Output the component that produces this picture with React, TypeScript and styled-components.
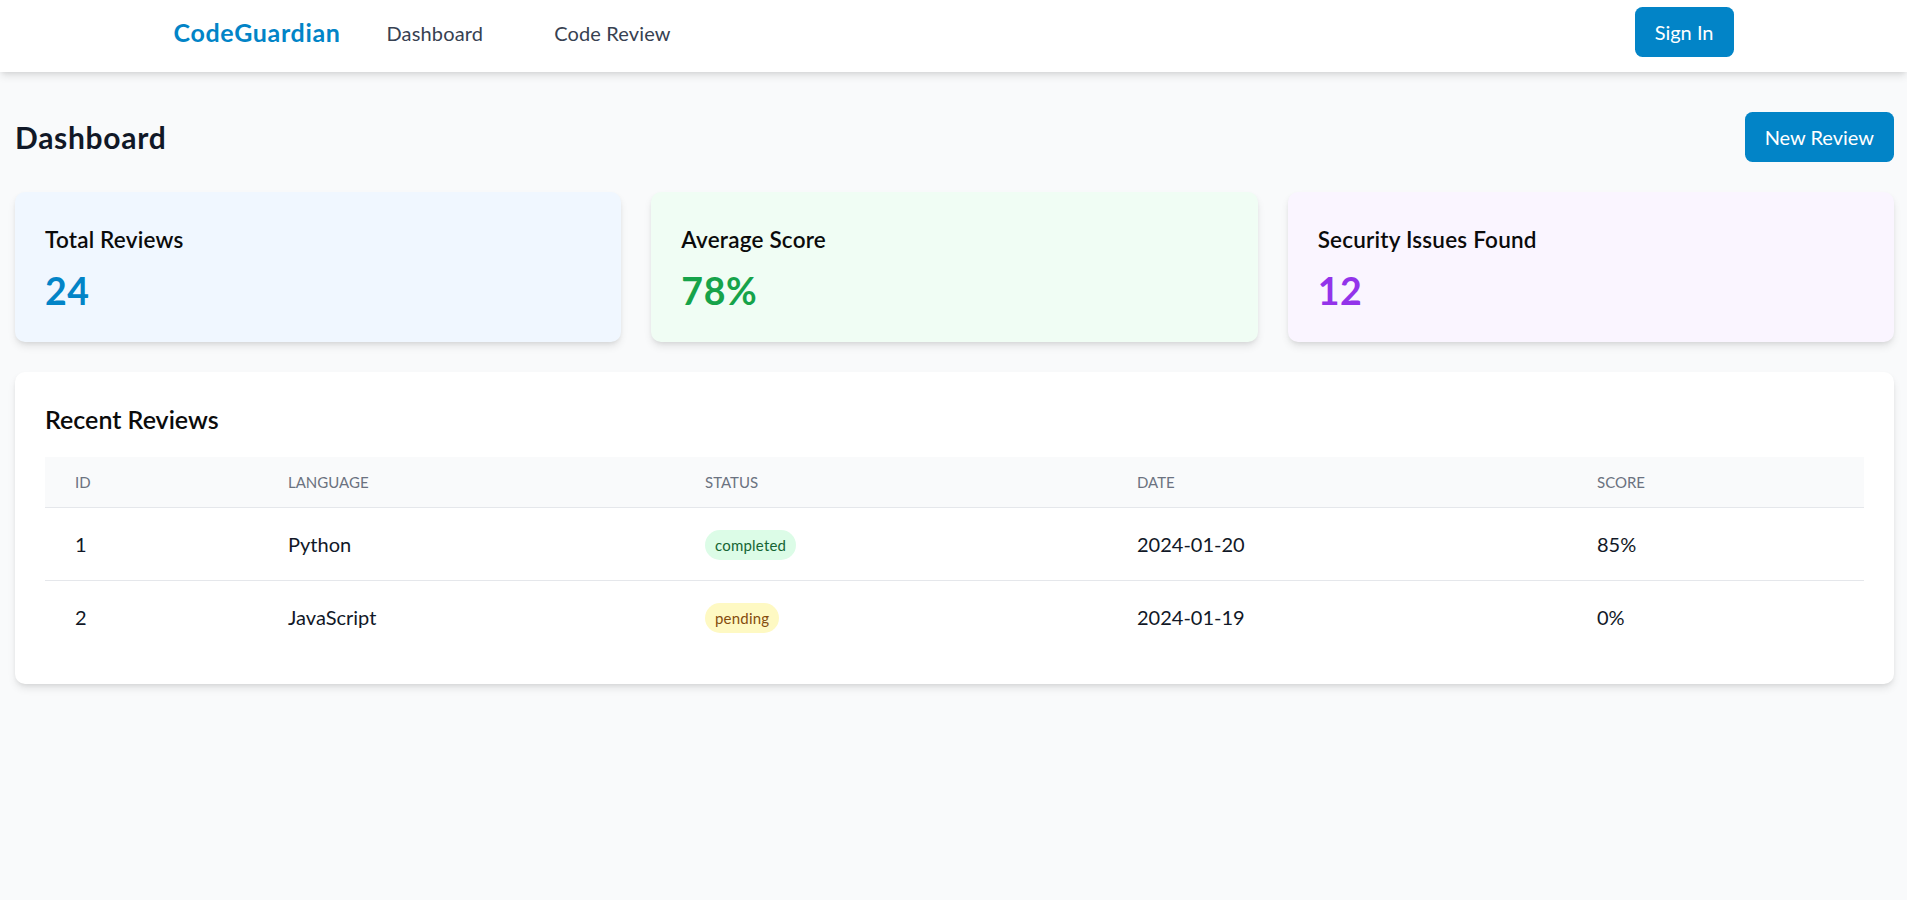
import React from "react";
import styled, { createGlobalStyle } from "styled-components";

const GlobalStyle = createGlobalStyle`
  html, body {
    margin: 0;
    padding: 0;
    background: #f9fafb;
    font-family: "Lato", "Noto Sans", "Liberation Sans", sans-serif;
    color: #111827;
  }
  * { box-sizing: border-box; }
`;

const Page = styled.div`
  min-height: 100vh;
  background: #f9fafb;
`;

const Nav = styled.nav`
  background: #ffffff;
  padding-bottom: 8px;
  box-shadow: 0 5px 8px -1px rgba(0, 0, 0, 0.1), 0 2px 5px -2px rgba(0, 0, 0, 0.1);
  position: relative;
  z-index: 1;
`;

const NavInner = styled.div`
  max-width: 1600px;
  margin: 0 auto;
  padding: 0 20px;
  height: 64px;
  display: flex;
  align-items: center;
  justify-content: space-between;
`;

const NavLeft = styled.div`
  display: flex;
  align-items: center;
  padding-top: 2px;
`;

const Logo = styled.span`
  font-size: 25px;
  line-height: 37.5px;
  font-weight: 700;
  letter-spacing: 0.65px;
  color: #0284c7;
`;

const NavLinks = styled.div`
  display: flex;
  align-items: center;
  gap: 31px;
  margin-left: 26px;
`;

const NavLink = styled.a`
  padding: 10px 20px;
  font-size: 20px;
  line-height: 30px;
  letter-spacing: 0.15px;
  color: #374151;
  text-decoration: none;
  cursor: pointer;
`;

const PrimaryButton = styled.button`
  background: #0284c7;
  color: #ffffff;
  border: none;
  border-radius: 7.5px;
  padding: 10px 20px;
  font-family: inherit;
  font-size: 20px;
  line-height: 30px;
  cursor: pointer;
`;

const Main = styled.main`
  padding: 40px 13px 30px 15px;
`;

const HeaderRow = styled.div`
  display: flex;
  align-items: center;
  justify-content: space-between;
  margin-bottom: 30px;
`;

const Heading = styled.h1`
  margin: 0;
  font-size: 30px;
  line-height: 40px;
  font-weight: 700;
  letter-spacing: 0.7px;
  color: #111827;
`;

const CardGrid = styled.div`
  display: grid;
  grid-template-columns: repeat(3, 1fr);
  gap: 30px;
  margin-bottom: 30px;
`;

const Card = styled.div<{ $bg: string }>`
  background: ${(p) => p.$bg};
  border-radius: 10px;
  padding: 30px;
  box-shadow: 0 5px 8px -1px rgba(0, 0, 0, 0.1), 0 2px 5px -2px rgba(0, 0, 0, 0.1);
`;

const CardTitle = styled.h3`
  margin: 0;
  font-size: 22.5px;
  line-height: 36px;
  font-weight: 600;
  letter-spacing: 0.2px;
  color: #0b0b0b;
`;

const CardValue = styled.p<{ $color: string }>`
  margin: 11px 0 0;
  font-size: 37.5px;
  line-height: 43px;
  font-weight: 700;
  letter-spacing: 0.6px;
  color: ${(p) => p.$color};
`;

const Panel = styled.section`
  background: #ffffff;
  border-radius: 10px;
  padding: 30px;
  box-shadow: 0 5px 8px -1px rgba(0, 0, 0, 0.1), 0 2px 5px -2px rgba(0, 0, 0, 0.1);
`;

const PanelTitle = styled.h2`
  margin: 0 0 20px;
  font-size: 25px;
  line-height: 35px;
  font-weight: 600;
  color: #0b0b0b;
`;

const Table = styled.table`
  width: 100%;
  border-collapse: collapse;
`;

const Col = styled.col<{ $w?: number }>`
  width: ${(p) => (p.$w ? `${p.$w}px` : "auto")};
`;

const Th = styled.th`
  padding: 15px 30px;
  font-size: 15px;
  line-height: 20px;
  font-weight: 400;
  text-transform: uppercase;
  text-align: left;
  color: #6b7280;
  background: #f9fafb;
  border-bottom: 1px solid #e5e7eb;
`;

const Tr = styled.tr`
  & + & td {
    border-top: 1px solid #e5e7eb;
  }
`;

const Td = styled.td`
  height: 73px;
  padding: 0 30px;
  font-size: 20px;
  line-height: 30px;
  color: #111827;
  white-space: nowrap;
  vertical-align: middle;
`;

const Badge = styled.span<{ $status: "completed" | "pending" }>`
  display: inline-block;
  padding: 5px 10px;
  border-radius: 999px;
  font-size: 15px;
  line-height: 20px;
  letter-spacing: 0.2px;
  background: ${(p) => (p.$status === "completed" ? "#dcfce7" : "#fef9c3")};
  color: ${(p) => (p.$status === "completed" ? "#166534" : "#854d0e")};
`;

const stats = [
  { title: "Total Reviews", value: "24", bg: "#f0f7ff", color: "#0284c7" },
  { title: "Average Score", value: "78%", bg: "#f0fdf4", color: "#16a34a" },
  { title: "Security Issues Found", value: "12", bg: "#faf5ff", color: "#9333ea" },
];

const reviews: {
  id: number;
  language: string;
  status: "completed" | "pending";
  date: string;
  score: string;
}[] = [
  { id: 1, language: "Python", status: "completed", date: "2024-01-20", score: "85%" },
  { id: 2, language: "JavaScript", status: "pending", date: "2024-01-19", score: "0%" },
];

export default function App() {
  return (
    <Page>
      <GlobalStyle />
      <Nav>
        <NavInner>
          <NavLeft>
            <Logo>CodeGuardian</Logo>
            <NavLinks>
              <NavLink>Dashboard</NavLink>
              <NavLink>Code Review</NavLink>
            </NavLinks>
          </NavLeft>
          <PrimaryButton>Sign In</PrimaryButton>
        </NavInner>
      </Nav>
      <Main>
        <HeaderRow>
          <Heading>Dashboard</Heading>
          <PrimaryButton>New Review</PrimaryButton>
        </HeaderRow>
        <CardGrid>
          {stats.map((s) => (
            <Card key={s.title} $bg={s.bg}>
              <CardTitle>{s.title}</CardTitle>
              <CardValue $color={s.color}>{s.value}</CardValue>
            </Card>
          ))}
        </CardGrid>
        <Panel>
          <PanelTitle>Recent Reviews</PanelTitle>
          <Table>
            <colgroup>
              <Col $w={213} />
              <Col $w={417} />
              <Col $w={432} />
              <Col $w={460} />
              <Col />
            </colgroup>
            <thead>
              <tr>
                <Th>ID</Th>
                <Th>Language</Th>
                <Th>Status</Th>
                <Th>Date</Th>
                <Th>Score</Th>
              </tr>
            </thead>
            <tbody>
              {reviews.map((r) => (
                <Tr key={r.id}>
                  <Td>{r.id}</Td>
                  <Td>{r.language}</Td>
                  <Td>
                    <Badge $status={r.status}>{r.status}</Badge>
                  </Td>
                  <Td>{r.date}</Td>
                  <Td>{r.score}</Td>
                </Tr>
              ))}
            </tbody>
          </Table>
        </Panel>
      </Main>
    </Page>
  );
}
